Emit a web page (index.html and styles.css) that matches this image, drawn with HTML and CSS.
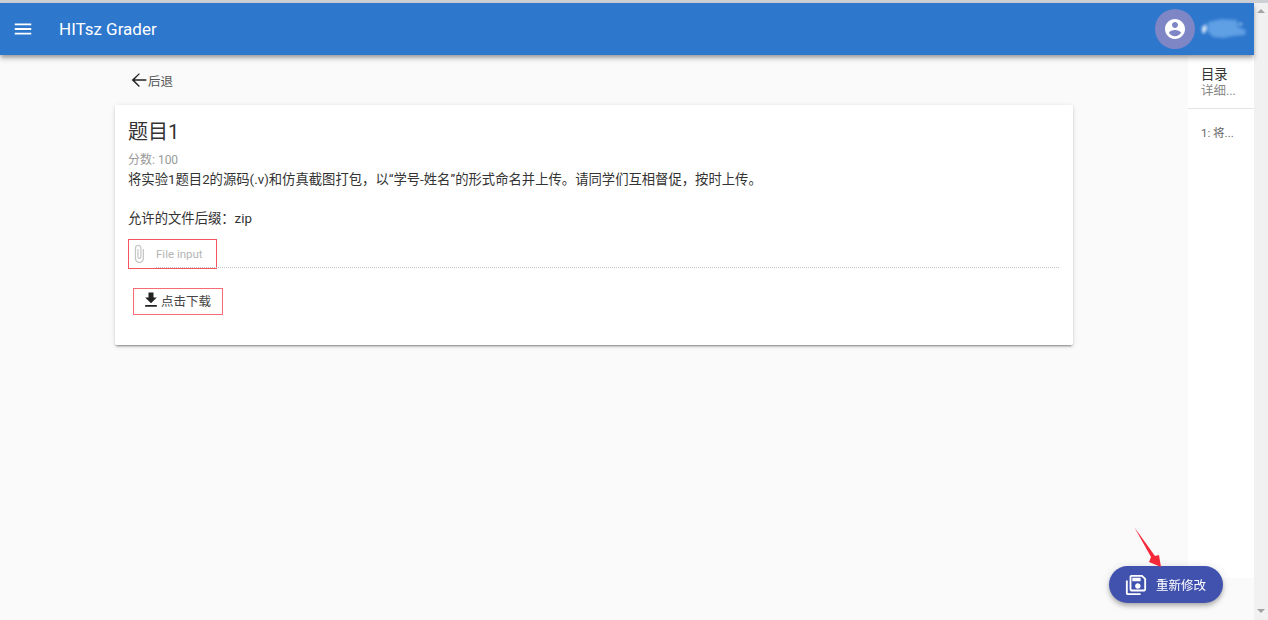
FILE: index.html
```html
<!DOCTYPE html>
<html lang="zh">
<head>
<meta charset="utf-8">
<title>HITsz Grader</title>
<link rel="stylesheet" href="styles.css">
</head>
<body>
<div class="window">
  <div class="app">
    <header class="appbar">
      <svg class="menu-icon" viewBox="0 0 24 24"><path d="M3 18h18v-2H3v2zm0-5h18v-2H3v2zm0-7v2h18V6H3z"/></svg>
      <div class="brand">HITsz Grader</div>
      <div class="spacer"></div>
      <div class="avatar">
        <svg viewBox="0 0 24 24"><path d="M12 2C6.48 2 2 6.48 2 12s4.48 10 10 10 10-4.48 10-10S17.52 2 12 2zm0 3c1.66 0 3 1.34 3 3s-1.34 3-3 3-3-1.34-3-3 1.34-3 3-3zm0 14.2c-2.5 0-4.71-1.28-6-3.22.03-1.99 4-3.08 6-3.08 1.99 0 5.97 1.09 6 3.08-1.29 1.94-3.5 3.22-6 3.22z"/></svg>
      </div>
      <svg class="blob" viewBox="0 0 46 22"><path d="M1 9 L5 6 L6 11 L3 16 L1 14 Z" fill="#d5e6fa"/><path d="M7 4 L20 1 L36 2 L37 9 L45 12 L44 17 L33 18 L22 20 L12 19 L7 14 Z" fill="#5f9fe3"/><path d="M38 5 L41 5 L41 7 L38 7 Z" fill="#bcd7f5"/></svg>
    </header>
    <div class="body">
      <main class="main">
        <div class="back">
          <svg viewBox="0 0 24 24"><path d="M20 11.300H7.300l5.600-5.900L12 4.500l-8 7.500 8 7.500.9-.9-5.600-5.900H20v-1.400z"/></svg>
          <span>后退</span>
        </div>
        <section class="card">
          <h1 class="title">题目1</h1>
          <div class="score">分数: 100</div>
          <p class="desc">将实验1题目2的源码(.v)和仿真截图打包，以“学号-姓名”的形式命名并上传。请同学们互相督促，按时上传。</p>
          <p class="ext">允许的文件后缀：zip</p>
          <div class="file-row">
            <div class="file-box">
              <svg viewBox="0 0 24 24"><path d="M16.5 6v11.500c0 2.210-1.790 4-4 4s-4-1.790-4-4V5a2.500 2.500 0 0 1 5 0v10.500c0 .55-.45 1-1 1s-1-.45-1-1V6H10v9.500a2.500 2.500 0 0 0 5 0V5c0-2.210-1.790-4-4-4S7 2.790 7 5v12.500c0 3.040 2.460 5.500 5.500 5.500s5.500-2.460 5.500-5.500V6h-1.500z"/></svg>
              <span>File input</span>
            </div>
          </div>
          <div class="download">
            <svg viewBox="0 0 24 24"><path d="M19 9h-4V3H9v6H5l7 7 7-7zM5 18v2h14v-2H5z"/></svg>
            <span>点击下载</span>
          </div>
        </section>
      </main>
      <aside class="toc">
        <div class="toc-head">
          <div class="toc-title">目录</div>
          <div class="toc-sub">详细...</div>
        </div>
        <div class="toc-item">1: 将...</div>
      </aside>
    </div>
  </div>
  <div class="scrollbar">
    <span class="arrow-up"></span>
    <span class="arrow-down"></span>
  </div>
</div>
<button class="fab">
  <svg viewBox="0 0 24 24"><path d="M1 7H3V21H17V23H3C1.900 23 1 22.110 1 21V7M19 1H7C5.890 1 5 1.900 5 3V17C5 18.100 5.890 19 7 19H21C22.100 19 23 18.100 23 17V5L19 1M21 17H7V3H18.170L21 5.830V17M14 10C12.340 10 11 11.340 11 13S12.340 16 14 16 17 14.660 17 13 15.660 10 14 10M8 4H17V8H8V4Z"/></svg>
  <span>重新修改</span>
</button>
<svg class="annot" viewBox="0 0 27 40"><path d="M.5 .5 L17 30 L15 35 L27 40 L25 28 L21 29 Z"/></svg>
</body>
</html>
```

FILE: styles.css
```css
* { box-sizing: border-box; }
html, body { margin: 0; height: 100%; overflow: hidden; }
body {
  font-family: Roboto, "Noto Sans CJK SC", sans-serif;
  color: rgba(0,0,0,.87);
  background: #fafafa;
}
.window { display: flex; height: 620px; border-top: 3px solid #ccd0d4; }
.app { flex: 1; display: flex; flex-direction: column; min-width: 0; }
.appbar {
  height: 52px;
  flex: none;
  display: flex;
  align-items: center;
  padding: 0 7px 0 14px;
  background: #2d77cd;
  color: #fff;
  box-shadow: 0 2px 4px -1px rgba(0,0,0,.3), 0 4px 5px 0 rgba(0,0,0,.2);
  position: relative;
  z-index: 2;
}
.menu-icon { width: 22px; height: 22px; fill: #fff; margin-left: -2px; flex: none; }
.brand { font-size: 17px; font-weight: 400; margin-left: 25px; }
.spacer { flex: 1; }
.avatar {
  width: 40px; height: 40px; border-radius: 50%;
  background: #7e86c6;
  display: flex; align-items: center; justify-content: center;
  margin-right: 6px;
}
.avatar svg { width: 24px; height: 24px; fill: #fff; }
.blob { width: 46px; height: 22px; filter: blur(1.5px); flex: none; }
.body { flex: 1; display: flex; min-height: 0; }
.main { flex: 1; padding: 14px 115px 0; min-width: 0; }
.back { display: flex; align-items: center; height: 22px; padding-left: 13px; font-size: 12.5px; color: #555; }
.back svg { width: 22px; height: 22px; fill: #222; flex: none; margin-right: -2px; }
.card {
  margin-top: 14px;
  height: 240px;
  background: #fff;
  border-radius: 2px;
  padding: 14px 13px 0;
  box-shadow: 0 3px 1px -2px rgba(0,0,0,.2), 0 2px 2px 0 rgba(0,0,0,.14), 0 1px 5px 0 rgba(0,0,0,.12);
}
.title { margin: 0; font-size: 20px; font-weight: 400; line-height: 26px; color: #333; }
.score { margin-top: 8px; font-size: 12px; line-height: 14px; color: #9a9a9a; }
.desc { margin: 3px 0 0; font-size: 13.33px; line-height: 20px; color: #333; }
.ext { margin: 19px 0 0; font-size: 13.33px; line-height: 20px; color: #333; }
.file-row {
  margin-top: 10px;
  height: 29px;
  position: relative;
}
.file-row::after {
  content: "";
  position: absolute;
  left: 28px; right: 1px; bottom: 0;
  border-bottom: 1px dotted #c4c4c4;
}
.file-box {
  width: 89px; height: 30px;
  border: 1px solid #f5535f;
  display: flex; align-items: center;
  color: #b5b5b5;
  font-size: 11.5px;
}
.file-box svg { width: 20px; height: 20px; fill: #c6c6c6; flex: none; margin-right: 7px; }
.download {
  margin: 20px 0 0 5px;
  width: 90px; height: 27px;
  border: 1px solid #f96a72;
  display: flex; align-items: center;
  padding: 0 0 3px 7px;
  font-size: 12.5px;
  color: #444;
}
.download svg { width: 20px; height: 20px; fill: #222; flex: none; }
.toc { width: 66px; flex: none; height: 523px; background: #fff; }
.toc-head { height: 54px; border-bottom: 1px solid #e4e4e4; padding: 12px 0 0 13px; }
.toc-title { font-size: 13.33px; line-height: 16px; color: #333; }
.toc-sub { font-size: 12.5px; line-height: 16px; color: #888; }
.toc-item { padding: 18px 0 0 13px; font-size: 11.5px; line-height: 12px; color: #666; }
.scrollbar { width: 14px; flex: none; background: #f1f1f1; display: flex; flex-direction: column; justify-content: space-between; align-items: center; padding: 6px 0 7px; }
.arrow-up { width: 0; height: 0; border: 4px solid transparent; border-top: 0; border-bottom: 4px solid #a3a3a3; }
.arrow-down { width: 0; height: 0; border: 4px solid transparent; border-bottom: 0; border-top: 4px solid #a3a3a3; }
.fab {
  position: fixed; left: 1109px; top: 566px;
  width: 114px; height: 37px; border: 0; border-radius: 19px;
  background: #4152ae; color: #fff;
  display: flex; align-items: center;
  padding: 0 0 0 16px;
  font: 12.5px "Noto Sans CJK SC", sans-serif;
  box-shadow: 0 2px 4px -1px rgba(0,0,0,.2), 0 4px 5px 0 rgba(0,0,0,.14), 0 1px 10px 0 rgba(0,0,0,.12);
}
.fab svg { width: 22px; height: 22px; fill: #fff; flex: none; margin-right: 9px; }
.annot { position: fixed; left: 1134px; top: 527px; width: 27px; height: 40px; fill: #f5283a; }
```
